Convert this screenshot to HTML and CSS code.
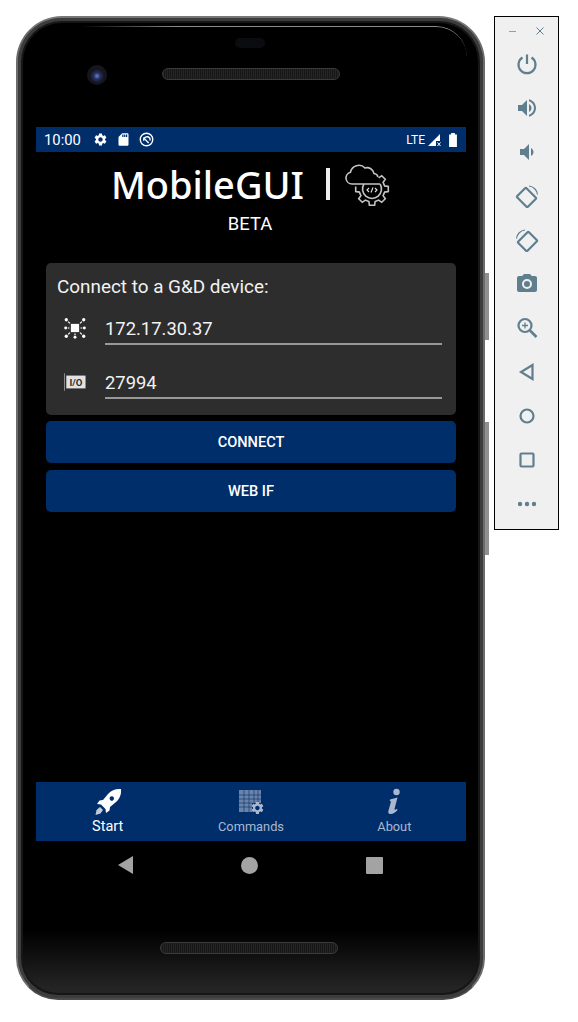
FILE: index.html
```html
<!DOCTYPE html>
<html lang="en">
<head>
    <meta charset="UTF-8">
    <meta name="viewport" content="width=device-width, initial-scale=1.0">
    <title>MobileGUI</title>
    <link rel="stylesheet" href="styles.css">
</head>
<body>
    <div class="phone">
        <span class="key key-power"></span>
        <span class="key key-volume"></span>
        <div class="bezel-top">
            <span class="sensor"></span>
            <span class="lens"></span>
            <span class="speaker speaker-top"></span>
        </div>

        <div class="screen">
            <div class="status-bar">
                <span class="clock">10:00</span>
                <svg class="status-icon" viewBox="0 0 24 24"><path d="M19.14 12.94c.04-.3.06-.61.06-.94 0-.32-.02-.64-.07-.94l2.03-1.58c.18-.14.23-.41.12-.61l-1.92-3.32c-.12-.22-.37-.29-.59-.22l-2.39.96c-.5-.38-1.03-.7-1.62-.94l-.36-2.54c-.04-.24-.24-.41-.48-.41h-3.84c-.24 0-.43.17-.47.41l-.36 2.54c-.59.24-1.13.57-1.62.94l-2.39-.96c-.22-.08-.47 0-.59.22L2.74 8.87c-.12.21-.08.47.12.61l2.03 1.58c-.05.3-.09.63-.09.94s.02.64.07.94l-2.03 1.58c-.18.14-.23.41-.12.61l1.92 3.32c.12.22.37.29.59.22l2.39-.96c.5.38 1.03.7 1.62.94l.36 2.54c.05.24.24.41.48.41h3.84c.24 0 .44-.17.47-.41l.36-2.54c.59-.24 1.13-.56 1.62-.94l2.39.96c.22.08.47 0 .59-.22l1.92-3.32c.12-.22.07-.47-.12-.61l-2.01-1.58zM12 15.6c-1.98 0-3.6-1.62-3.6-3.6s1.62-3.6 3.6-3.6 3.6 1.62 3.6 3.6-1.62 3.6-3.6 3.6z"/></svg>
                <svg class="status-icon" viewBox="0 0 24 24"><path d="M18 2h-8L4.02 8 4 20c0 1.1.9 2 2 2h12c1.1 0 2-.9 2-2V4c0-1.1-.9-2-2-2zm-6 6h-2V4h2v4zm3 0h-2V4h2v4zm3 0h-2V4h2v4z"/></svg>
                <svg class="status-icon status-ring" viewBox="0 0 24 24" fill="none" stroke="#fff" stroke-width="2.2"><circle cx="12" cy="12" r="10"/><path d="M7 9l8.5 8.500"/><path d="M7.500 14a5.500 5.500 0 0 1 9.500-4.500 5 5 0 0 1 .5 4"/></svg>
                <span class="status-right">
                    <span class="lte">LTE</span>
                    <svg class="signal" viewBox="0 0 14 14"><path d="M0 13 12 1v7H8v5z"/><path d="M9.5 9.500l3 3.500m0-3.500-3 3.500" stroke="#fff"/></svg>
                    <svg class="battery" viewBox="0 0 10 15"><path d="M3 0h4v1.500h2.200V15H.8V1.500H3z"/></svg>
                </span>
            </div>

            <div class="content">
                <div class="brand">
                    <span class="brand-name">MobileGUI</span>
                    <span class="brand-bar"></span>
                    <svg class="brand-logo" viewBox="0 0 46 43" fill="none" stroke="#c4c4c4" stroke-width="1.6">
                        <path d="M35 21H7a6 6 0 0 1-1.500-11.800A8.500 8.500 0 0 1 20 5a7 7 0 0 1 9 5.500 4.500 4.500 0 0 1 4 3.500"/>
                        <path d="M33.700 14.900 36.700 12.700 40.300 16.300 38.100 19.300 39.600 22.900 43.300 23.400V28.600L39.600 29.100 38.100 32.700 40.300 35.700 36.700 39.300 33.700 37.100 30.100 38.600 29.600 42.300H24.400L23.900 38.600 20.300 37.100 17.300 39.300 13.700 35.700 15.900 32.700 14.400 29.100 10.700 28.600V23.400"/>
                        <path d="M35.100 21A9.500 9.500 0 1 1 18.900 21"/>
                        <path d="M24 25l-2 2 2 2M30 25l2 2-2 2M28 24.500l-2 5" stroke-width="1.100" stroke="#e4e4e4"/>
                    </svg>
                </div>
                <div class="beta">BETA</div>

                <div class="connect-card">
                    <div class="connect-title">Connect to a G&amp;D device:</div>
                    <div class="field">
                        <svg class="field-icon" viewBox="0 0 24 24" fill="#fff">
                            <rect x="7.500" y="7.500" width="9" height="9"/>
                            <circle cx="2.500" cy="3" r="1.800"/><circle cx="21.500" cy="3" r="1.800"/>
                            <circle cx="2.500" cy="21" r="1.800"/><circle cx="21.500" cy="21" r="1.800"/>
                            <circle cx="12" cy="22" r="1.600"/>
                            <circle cx="1.800" cy="12" r="1.600"/><circle cx="22.200" cy="12" r="1.600"/>
                            <path d="M4.500 5l2 2M19.500 5l-2 2M4.500 19l2-2M19.500 19l-2-2M12 18v2M4 12h2M18 12h2" stroke="#fff" stroke-width="1.300"/>
                        </svg>
                        <div class="field-value">172.17.30.37</div>
                    </div>
                    <div class="field">
                        <svg class="field-icon" viewBox="0 0 24 24">
                            <path d="M.5 2.500v19" stroke="#999" stroke-width="1"/>
                            <rect x="2.500" y="5" width="21" height="14" fill="#e2e2e2"/>
                            <text x="13" y="16" class="io-text">I/O</text>
                        </svg>
                        <div class="field-value">27994</div>
                    </div>
                </div>
                <button class="action-button">CONNECT</button>
                <button class="action-button">WEB IF</button>
            </div>

            <div class="tab-bar">
                <div class="tab tab-active">
                    <svg class="tab-icon" viewBox="0 0 28 28" fill="#fff">
                        <path d="M27 1c-5-.5-9.500 1-13 5l-5 6-3.500.5L3 16l4 .500L11.500 21l.5 4 3.500-2.500.5-3.500 6-5c4-3.500 5.500-8 5-13zm-7 9.500a2.200 2.200 0 1 1 0-.01z"/>
                        <path d="M6 19l3 3-2.500 3.500-5 1.500 1-5z" opacity=".75"/>
                    </svg>
                    <span>Start</span>
                </div>
                <div class="tab">
                    <svg class="tab-icon" viewBox="0 0 28 28">
                        <path d="M2 2h22v13h-9v9H2z" fill="#6b83a9"/>
                        <path d="M2 7h22M2 11h22M2 15h13M2 19h13M7 2v22M12 2v22M17 2v13M21 2v13" stroke="#00306b" stroke-width=".6"/>
                        <path transform="translate(13 12.500) scale(.62)" fill="#a9b8cf" d="M19.14 12.94c.04-.3.06-.61.06-.94 0-.32-.02-.64-.07-.94l2.03-1.58c.18-.14.23-.41.12-.61l-1.92-3.32c-.12-.22-.37-.29-.59-.22l-2.39.96c-.5-.38-1.03-.7-1.62-.94l-.36-2.54c-.04-.24-.24-.41-.48-.41h-3.84c-.24 0-.43.17-.47.41l-.36 2.54c-.59.24-1.13.57-1.62.94l-2.39-.96c-.22-.08-.47 0-.59.22L2.74 8.87c-.12.21-.08.47.12.61l2.03 1.58c-.05.3-.09.63-.09.94s.02.64.07.94l-2.03 1.58c-.18.14-.23.41-.12.61l1.92 3.32c.12.22.37.29.59.22l2.39-.96c.5.38 1.03.7 1.62.94l.36 2.54c.05.24.24.41.48.41h3.84c.24 0 .44-.17.47-.41l.36-2.54c.59-.24 1.13-.56 1.62-.94l2.39.96c.22.08.47 0 .59-.22l1.92-3.32c.12-.22.07-.47-.12-.61l-2.01-1.58zM12 15.6c-1.98 0-3.6-1.62-3.6-3.6s1.62-3.6 3.6-3.6 3.6 1.62 3.6 3.6-1.62 3.6-3.6 3.6z"/>
                    </svg>
                    <span>Commands</span>
                </div>
                <div class="tab">
                    <svg class="tab-icon" viewBox="0 0 28 28" fill="#a9b8cf">
                        <circle cx="16.500" cy="4" r="3.200"/>
                        <path d="M10 11.500 17.500 9.500 14.500 21c-.2 1 .6 1.200 2.500-.3l.5 1.300c-2.500 3-5 4.300-7.500 4-1.500-.3-2-1.300-1.600-3L11 13.500l-1.200-.5z"/>
                    </svg>
                    <span>About</span>
                </div>
            </div>

            <div class="nav-bar">
                <span class="nav-back"></span>
                <span class="nav-home"></span>
                <span class="nav-recent"></span>
            </div>
        </div>

        <span class="speaker speaker-bottom"></span>
    </div>

    <div class="emu-toolbar">
        <div class="emu-title">
            <span class="emu-min"></span>
            <svg class="emu-close" viewBox="0 0 10 10"><path d="M1.500 1.500l7 7m0-7-7 7"/></svg>
        </div>
        <svg class="emu-icon" viewBox="0 0 24 24"><path class="line" d="M12 2.500v9.500M7.500 5.500a8.500 8.500 0 1 0 9 0"/></svg>
        <svg class="emu-icon" viewBox="0 0 24 24"><path d="M3 9v6h4l5 5V4L7 9H3zm13.500 3c0-1.770-1.020-3.290-2.500-4.030v8.050c1.480-.73 2.500-2.250 2.500-4.020zM14 3.230v2.060c2.890.860 5 3.540 5 6.710s-2.110 5.850-5 6.710v2.060c4.010-.91 7-4.490 7-8.770s-2.990-7.860-7-8.770z"/></svg>
        <svg class="emu-icon" viewBox="0 0 24 24"><path d="M18.500 12c0-1.770-1.020-3.290-2.500-4.030v8.050c1.480-.73 2.500-2.250 2.500-4.020zM5 9v6h4l5 5V4L9 9H5z"/></svg>
        <svg class="emu-icon" viewBox="0 0 24 24"><g class="line"><rect x="5" y="6" width="13" height="15" rx="1" transform="rotate(-45 11.500 13.500)"/><path d="M14 2a9.500 9.500 0 0 1 8.500 8.500" stroke-width="1.200"/></g></svg>
        <svg class="emu-icon" viewBox="0 0 24 24"><g class="line"><rect x="6" y="6" width="13" height="15" rx="1" transform="rotate(45 12.500 13.500)"/><path d="M10 2a9.500 9.500 0 0 0-8.500 8.500" stroke-width="1.200"/></g></svg>
        <svg class="emu-icon" viewBox="0 0 24 24"><path d="M9 2 7.170 4H4c-1.100 0-2 .9-2 2v12c0 1.100.9 2 2 2h16c1.100 0 2-.9 2-2V6c0-1.100-.9-2-2-2h-3.170L15 2H9zm3 15a5 5 0 1 1 0-10 5 5 0 0 1 0 10zm0-2a3 3 0 1 0 0-6 3 3 0 0 0 0 6z" fill-rule="evenodd"/></svg>
        <svg class="emu-icon" viewBox="0 0 24 24"><g class="line"><circle cx="10" cy="9.500" r="6.500"/><path d="M15 14.500l6.500 6.500" stroke-width="2.600"/><path d="M10 6.500v6M7 9.500h6" stroke-width="1.300"/></g></svg>
        <svg class="emu-icon" viewBox="0 0 24 24"><path class="line" d="M17.500 5v14L6 12z"/></svg>
        <svg class="emu-icon" viewBox="0 0 24 24"><circle class="line" cx="12" cy="12" r="6.500"/></svg>
        <svg class="emu-icon" viewBox="0 0 24 24"><rect class="line" x="5.500" y="5.500" width="13" height="13" rx="1"/></svg>
        <svg class="emu-icon" viewBox="0 0 24 24"><circle cx="5" cy="12" r="2.200"/><circle cx="12" cy="12" r="2.200"/><circle cx="19" cy="12" r="2.200"/></svg>
    </div>
</body>
</html>
```

FILE: styles.css
```css
body {
    display: flex;
    align-items: flex-start;
    gap: 9px;
    margin: 0;
    padding: 16px;
    background-color: #fff;
    font-family: Roboto, "Liberation Sans", sans-serif;
    color: #fff;
}

/* phone body */
.phone {
    position: relative;
    flex: none;
    box-sizing: border-box;
    width: 469px;
    height: 984px;
    padding: 0 17px 0 18px;
    border: 2px solid #6c6c6c;
    border-color: #777 #6c6c6c #4a4a4a;
    border-radius: 46px 46px 42px 42px;
    background: linear-gradient(#000 93%, #242424 99%);
    box-shadow: inset 0 0 0 3px #3c3c3c, inset 0 0 0 5px #161616;
}
/* highlight along the top of the glass */
.phone::before {
    content: "";
    position: absolute;
    top: 8px;
    left: 62px;
    right: 16px;
    height: 30px;
    border-top: 1.5px solid #8c8c8c;
    border-top-right-radius: 38px;
    -webkit-mask-image: linear-gradient(90deg, transparent, #000 25%);
    mask-image: linear-gradient(90deg, transparent, #000 25%);
}
.key {
    position: absolute;
    right: -6px;
    width: 4px;
    background-color: #8f8f8f;
}
.key-power {
    top: 255px;
    height: 67px;
}
.key-volume {
    top: 404px;
    height: 133px;
}
.bezel-top {
    position: relative;
    height: 109px;
}
.sensor {
    position: absolute;
    top: 20px;
    left: 199px;
    width: 30px;
    height: 10px;
    border-radius: 5px;
    background-color: #0b0c10;
}
.lens {
    position: absolute;
    top: 47px;
    left: 51px;
    width: 20px;
    height: 20px;
    border-radius: 50%;
    background: radial-gradient(circle at 50% 55%, #6d7fd6 0, #26305f 22%, #14151c 48%, #1a1a1c 100%);
}
.speaker {
    position: absolute;
    width: 176px;
    height: 10px;
    border: 1px solid #3a3a3a;
    border-radius: 6px;
    background: repeating-linear-gradient(90deg, #262626 0 1px, #161616 1px 2px);
}
.speaker-top {
    top: 50px;
    left: 126px;
}
.speaker-bottom {
    bottom: 44px;
    left: 142px;
}

/* screen */
.screen {
    display: flex;
    flex-direction: column;
    height: 763px;
    background-color: #000;
}
.status-bar {
    display: flex;
    flex: none;
    align-items: center;
    height: 25px;
    padding: 0 8px;
    background-color: #002e6b;
    font-size: 14.8px;
}
.clock {
    margin-right: 12px;
}
.status-icon {
    width: 15px;
    height: 15px;
    margin-right: 8px;
    fill: #fff;
}
.status-ring {
    fill: none;
}
.status-right {
    display: flex;
    align-items: center;
    gap: 3px;
    margin-left: auto;
}
.lte {
    font-size: 12px;
}
.signal {
    width: 14px;
    height: 14px;
    fill: #fff;
}
.battery {
    width: 10px;
    height: 14px;
    margin-left: 3px;
    fill: #fff;
}
.content {
    flex: 1;
    padding: 0 10px;
}
.brand {
    display: flex;
    align-items: center;
    justify-content: center;
    height: 50px;
    margin-top: 7px;
}
.brand-name {
    font-family: "Noto Sans", sans-serif;
    font-size: 38px;
    font-weight: 500;
}
.brand-bar {
    width: 4px;
    height: 32px;
    margin: 0 15px 0 22px;
    background-color: #eee;
}
.brand-logo {
    width: 46px;
    height: 43px;
}
.beta {
    height: 26px;
    margin-top: 3px;
    padding-right: 2px;
    font-size: 18.4px;
    line-height: 24px;
    text-align: center;
}
.connect-card {
    box-sizing: border-box;
    height: 152px;
    margin-top: 25px;
    padding: 13px 14px 0 11px;
    border-radius: 5px;
    background-color: #2d2d2d;
}
.connect-title {
    height: 29px;
    font-size: 18.9px;
    line-height: 22px;
    color: #f2f2f2;
}
.field {
    display: flex;
    align-items: flex-start;
    height: 54px;
}
.field-icon {
    flex: none;
    width: 22px;
    height: 22px;
    margin: 12px 19px 0 7px;
}
.io-text {
    fill: #2d2d2d;
    font-size: 10.5px;
    font-weight: 700;
    text-anchor: middle;
}
.field-value {
    flex: 1;
    height: 24px;
    padding-top: 14px;
    border-bottom: 2px solid #999;
    font-size: 18.4px;
    line-height: 20px;
    color: #f2f2f2;
}
.action-button {
    display: block;
    width: 100%;
    height: 42px;
    margin-top: 6px;
    border: none;
    border-radius: 5px;
    background-color: #002e6b;
    color: #fff;
    font-family: Roboto, sans-serif;
    font-size: 14.6px;
    font-weight: 500;
}
.action-button + .action-button {
    margin-top: 7px;
}
.tab-bar {
    display: flex;
    flex: none;
    height: 59px;
    background-color: #002e6b;
}
.tab {
    display: flex;
    flex: 1;
    flex-direction: column;
    align-items: center;
    padding-top: 6px;
    font-size: 12.8px;
    color: #a9b8cf;
}
.tab span {
    padding-top: 1px;
}
.tab-active {
    font-size: 14.5px;
    color: #fff;
}
.tab-active span {
    padding-top: 0;
}
.tab-icon {
    width: 28px;
    height: 28px;
    margin-bottom: 2px;
}
.nav-bar {
    display: flex;
    flex: none;
    align-items: center;
    justify-content: space-between;
    height: 48px;
    padding: 0 83px 1px 82px;
}
.nav-back {
    width: 0;
    height: 0;
    border-top: 9px solid transparent;
    border-bottom: 9px solid transparent;
    border-right: 15px solid #a3a3a3;
}
.nav-home {
    width: 17px;
    height: 17px;
    border-radius: 50%;
    background-color: #a3a3a3;
}
.nav-recent {
    width: 17px;
    height: 17px;
    border-radius: 1px;
    background-color: #a3a3a3;
}

/* emulator side toolbar */
.emu-toolbar {
    display: flex;
    flex: none;
    flex-direction: column;
    align-items: center;
    box-sizing: border-box;
    width: 65px;
    height: 514px;
    padding-top: 9px;
    border: 1px solid #000;
    background-color: #f0f0f0;
}
.emu-title {
    display: flex;
    align-items: center;
    justify-content: space-between;
    width: 36px;
    height: 10px;
    margin-bottom: 16px;
}
.emu-min {
    width: 7px;
    height: 1px;
    background-color: #8fa0aa;
}
.emu-close {
    width: 10px;
    height: 10px;
    fill: none;
    stroke: #5f7f8f;
    stroke-width: 1;
}
.emu-icon {
    flex: none;
    width: 24px;
    height: 24px;
    margin-bottom: 20px;
    fill: #5f7f8f;
}
.line {
    fill: none;
    stroke: #5f7f8f;
    stroke-width: 2.2;
}
```
